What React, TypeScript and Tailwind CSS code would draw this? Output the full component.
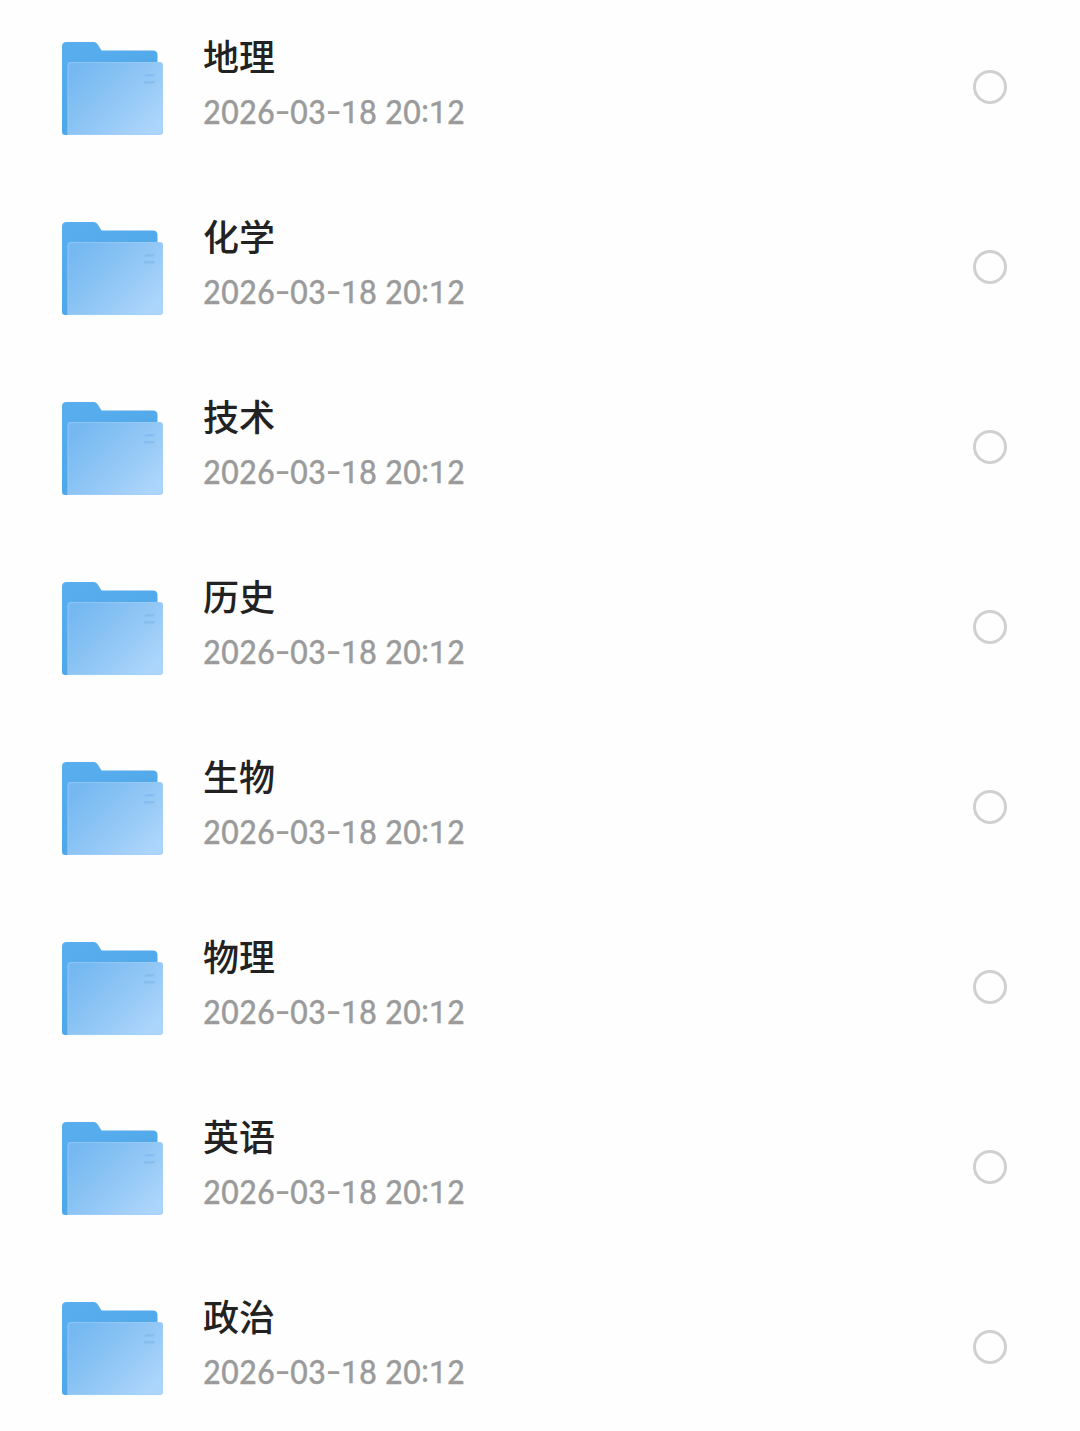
const subjects = ['地理', '化学', '技术', '历史', '生物', '物理', '英语', '政治'];
const modified = '2026-03-18 20:12';

function FolderIcon() {
  return (
    <svg width="104" height="96" viewBox="0 0 104 96" className="block shrink-0" aria-hidden="true">
      <defs>
        <linearGradient id="back" x1="0" y1="0" x2="0.5" y2="1">
          <stop offset="0" stopColor="#59aeee" />
          <stop offset="1" stopColor="#4da6e8" />
        </linearGradient>
        <linearGradient id="front" gradientUnits="userSpaceOnUse" x1="18" y1="30" x2="84" y2="96">
          <stop offset="0" stopColor="#76b9f1" />
          <stop offset="0.5" stopColor="#90c6f5" />
          <stop offset="1" stopColor="#acd5fb" />
        </linearGradient>
      </defs>
      <path
        d="M1 6.500Q1 2 5.500 2H32.500Q35 2 36.500 4L40.500 10.500H92Q96.500 10.500 96.500 15V60L12 95H4Q1 95 1 92Z"
        fill="url(#back)"
      />
      <path d="M6.500 25Q6.500 22 9.500 22H98.500Q102 22 102 25.500V91.500Q102 95 98.500 95H6.500Z" fill="url(#front)" />
      <path d="M7 94.500V25.500Q7 22.500 10 22.500H98.500Q101.500 22.500 101.500 25.500V91.500Q101.500 94.500 98.500 94.500Z" fill="none" stroke="#a0d0fa" strokeOpacity="0.55" />
      <path d="M85 34H94L92 36.500H83ZM83 41H94L93 43.500H83Z" fill="#79b4ed" fillOpacity="0.55" />
    </svg>
  );
}

function DateText({ value }: { value: string }) {
  return (
    <span className="flex h-10 items-center whitespace-pre font-['Lato',sans-serif] text-[32px] font-medium leading-10 text-[#9b9b9b]">
      {Array.from(value).map((char, i) => {
        if (char === '-')
          return (
            <span key={i} className="inline-block w-[15px] -translate-y-px scale-x-[1.4] text-center">
              -
            </span>
          );
        if (char === ' ') return <span key={i} className="inline-block w-[8px]"> </span>;
        if (char === ':') return <span key={i} className="inline-block w-[8px] -translate-y-[2px] text-center">:</span>;
        if (char === '1')
          return (
            <span key={i} className="flex w-[18px] justify-center font-['Roboto',sans-serif] font-normal [-webkit-text-stroke:0.4px_#9b9b9b]">
              1
            </span>
          );
        return (
          <span key={i} className="flex w-[18px] scale-x-[0.94] justify-center [-webkit-text-stroke:0.4px_#9b9b9b]">
            {char}
          </span>
        );
      })}
    </span>
  );
}

export default function App() {
  return (
    <main className="h-[1431px] w-[1080px] overflow-hidden bg-[#fefefe]">
      <ul>
        {subjects.map((name) => (
          <li key={name} className="flex h-[180px] items-start pl-[61px] pr-[73px] pt-[29px]">
            <div className="mt-[11px]">
              <FolderIcon />
            </div>
            <div className="ml-[38px] flex flex-col">
              <span className="h-[52px] font-['Noto_Sans_CJK_SC',sans-serif] text-[36px] font-medium leading-[52px] text-[#222222]">
                {name}
              </span>
              <span className="mt-[11px]">
                <DateText value={modified} />
              </span>
            </div>
            <button
              type="button"
              aria-label={name}
              className="ml-auto mt-[41px] size-[34px] rounded-full border-[3px] border-[#d0d0d0]"
            />
          </li>
        ))}
      </ul>
    </main>
  );
}
